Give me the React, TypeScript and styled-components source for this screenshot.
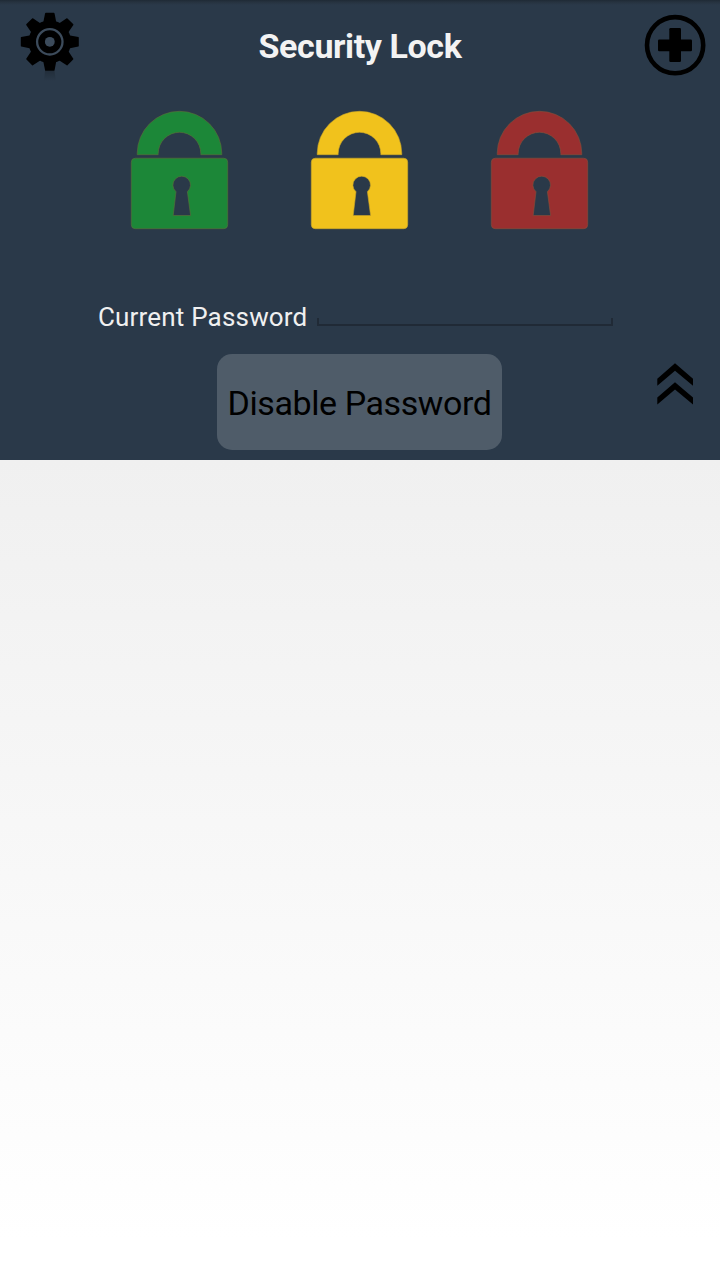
import React from "react";
import styled, { createGlobalStyle } from "styled-components";

const GlobalStyle = createGlobalStyle`
  * { box-sizing: border-box; }
  body { margin: 0; font-family: Roboto, "Liberation Sans", sans-serif; }
`;

const Screen = styled.div`
  width: 720px;
  height: 1280px;
  overflow: hidden;
  display: flex;
  flex-direction: column;
`;

const Panel = styled.section`
  height: 460px;
  flex: none;
  display: flex;
  flex-direction: column;
  background: linear-gradient(#1f2a35 0, #26323f 2px, #2a3949 5px);
`;

const Content = styled.main`
  flex: 1;
  background: linear-gradient(#f0f0f0, #ffffff 95%);
`;

const Header = styled.header`
  height: 90px;
  display: grid;
  grid-template-columns: 100px 1fr 90px;
`;

const Title = styled.h1`
  margin: 0 0 0 -10px;
  padding-top: 26px;
  text-align: center;
  font-size: 34px;
  line-height: 40px;
  font-weight: 700;
  letter-spacing: -0.4px;
  color: #f3f3f3;
  white-space: nowrap;
`;

const IconButton = styled.button`
  border: 0;
  padding: 0;
  background: none;
  display: block;
`;

const Locks = styled.div`
  display: flex;
  justify-content: center;
  gap: 60px;
  padding-top: 10px;
  height: 202px;
`;

const Field = styled.label`
  height: 50px;
  display: flex;
  padding-left: 98px;
  color: #f0f0f0;
`;

const FieldLabel = styled.span`
  width: 219px;
  padding-top: 10px;
  font-size: 26px;
  line-height: 30px;
  letter-spacing: 0.18px;
  white-space: nowrap;
`;

const InputBox = styled.span`
  width: 296px;
  height: 34px;
  display: flex;
  border-bottom: 2px solid #202a36;
  background:
    linear-gradient(#202a36, #202a36) left bottom / 2px 6px no-repeat,
    linear-gradient(#202a36, #202a36) right bottom / 2px 6px no-repeat;
`;

const Input = styled.input`
  width: 100%;
  border: 0;
  outline: 0;
  padding: 0 8px;
  background: none;
  color: inherit;
  font: 26px Roboto, sans-serif;
`;

const Actions = styled.div`
  display: grid;
  grid-template-columns: 217px 285px 1fr;
  padding-top: 12px;
`;

const DisableButton = styled.button`
  grid-column: 2;
  height: 96px;
  border: 0;
  border-radius: 15px;
  padding: 1px 0 0;
  background: #4f5c69;
  color: #000;
  font: 400 34px/40px Roboto, "Liberation Sans", sans-serif;
  letter-spacing: -0.42px;
  white-space: nowrap;
`;

const CollapseButton = styled(IconButton)`
  justify-self: end;
  width: 90px;
  height: 60px;
`;

const TOOTH = "M-6.6 -19 L-4.7 -28.6 Q-4.6 -29 -4 -29 H4 Q4.6 -29 4.7 -28.6 L6.6 -19 Z";

function Gear() {
  return (
    <svg width="100" height="90" viewBox="0 0 100 90">
      <defs>
        <linearGradient id="reflection" x1="0" y1="0" x2="0" y2="1">
          <stop offset="0" stopColor="#000" stopOpacity="0.2" />
          <stop offset="1" stopColor="#000" stopOpacity="0" />
        </linearGradient>
      </defs>
      <path d="M45 71 H54.5 L56 81 H44 Z" fill="url(#reflection)" />
      <g transform="translate(49.8 41.8)">
        {[0, 45, 90, 135, 180, 225, 270, 315].map((angle) => (
          <path key={angle} d={TOOTH} transform={`rotate(${angle})`} />
        ))}
        <circle r="21.3" />
        <circle r="12.7" fill="none" stroke="#3c4b5b" strokeWidth="2.3" />
        <circle r="4.9" fill="#3c4b5b" />
      </g>
    </svg>
  );
}

function Add() {
  return (
    <svg width="90" height="90" viewBox="0 0 90 90">
      <circle cx="45.1" cy="45.2" r="28.1" fill="none" stroke="#000" strokeWidth="4.6" />
      <rect x="28" y="39.5" width="34" height="11.7" rx="1.2" />
      <rect x="39.3" y="28" width="11.7" height="34" rx="1.2" />
    </svg>
  );
}

function Padlock({ color, edge }: { color: string; edge: string }) {
  return (
    <svg width="120" height="140" viewBox="0 0 120 140">
      <g fill={color} stroke={edge} strokeWidth="0.6">
        <path d="M17.2 54.7 V53.6 A42.3 42.3 0 0 1 101.8 53.6 V54.7 H80.8 V53.6 A21.3 21.3 0 0 0 38.2 53.6 V54.7 Z" />
        <path
          fillRule="evenodd"
          d="M15.3 58.2 H103.7 Q107.7 58.2 107.7 62.2 V124.7 Q107.7 128.7 103.7 128.7 H15.3 Q11.3 128.7 11.3 124.7 V62.2 Q11.3 58.2 15.3 58.2 Z M56 91.7 L53.2 115.5 H70.6 L67.4 91.7 A8.8 8.8 0 1 0 56 91.7 Z"
        />
      </g>
    </svg>
  );
}

function Collapse() {
  return (
    <svg width="90" height="60" viewBox="0 0 90 60">
      <path d="M27.3 24.7 L45 9.3 L63 24.7 V31.7 L45 16.7 L27.3 31.7 Z" />
      <path d="M27.3 43.5 L45 28.2 L63 43.5 V50.5 L45 35.6 L27.3 50.5 Z" />
    </svg>
  );
}

export default function App() {
  return (
    <Screen>
      <GlobalStyle />
      <Panel>
        <Header>
          <IconButton aria-label="Settings"><Gear /></IconButton>
          <Title>Security Lock</Title>
          <IconButton aria-label="Add"><Add /></IconButton>
        </Header>
        <Locks>
          <Padlock color="#1c8738" edge="#5d7138" />
          <Padlock color="#f1c21c" edge="#d0aa27" />
          <Padlock color="#9a2f2f" edge="#85503a" />
        </Locks>
        <Field>
          <FieldLabel>Current Password</FieldLabel>
          <InputBox><Input type="password" aria-label="Current Password" /></InputBox>
        </Field>
        <Actions>
          <DisableButton>Disable Password</DisableButton>
          <CollapseButton aria-label="Collapse"><Collapse /></CollapseButton>
        </Actions>
      </Panel>
      <Content />
    </Screen>
  );
}
